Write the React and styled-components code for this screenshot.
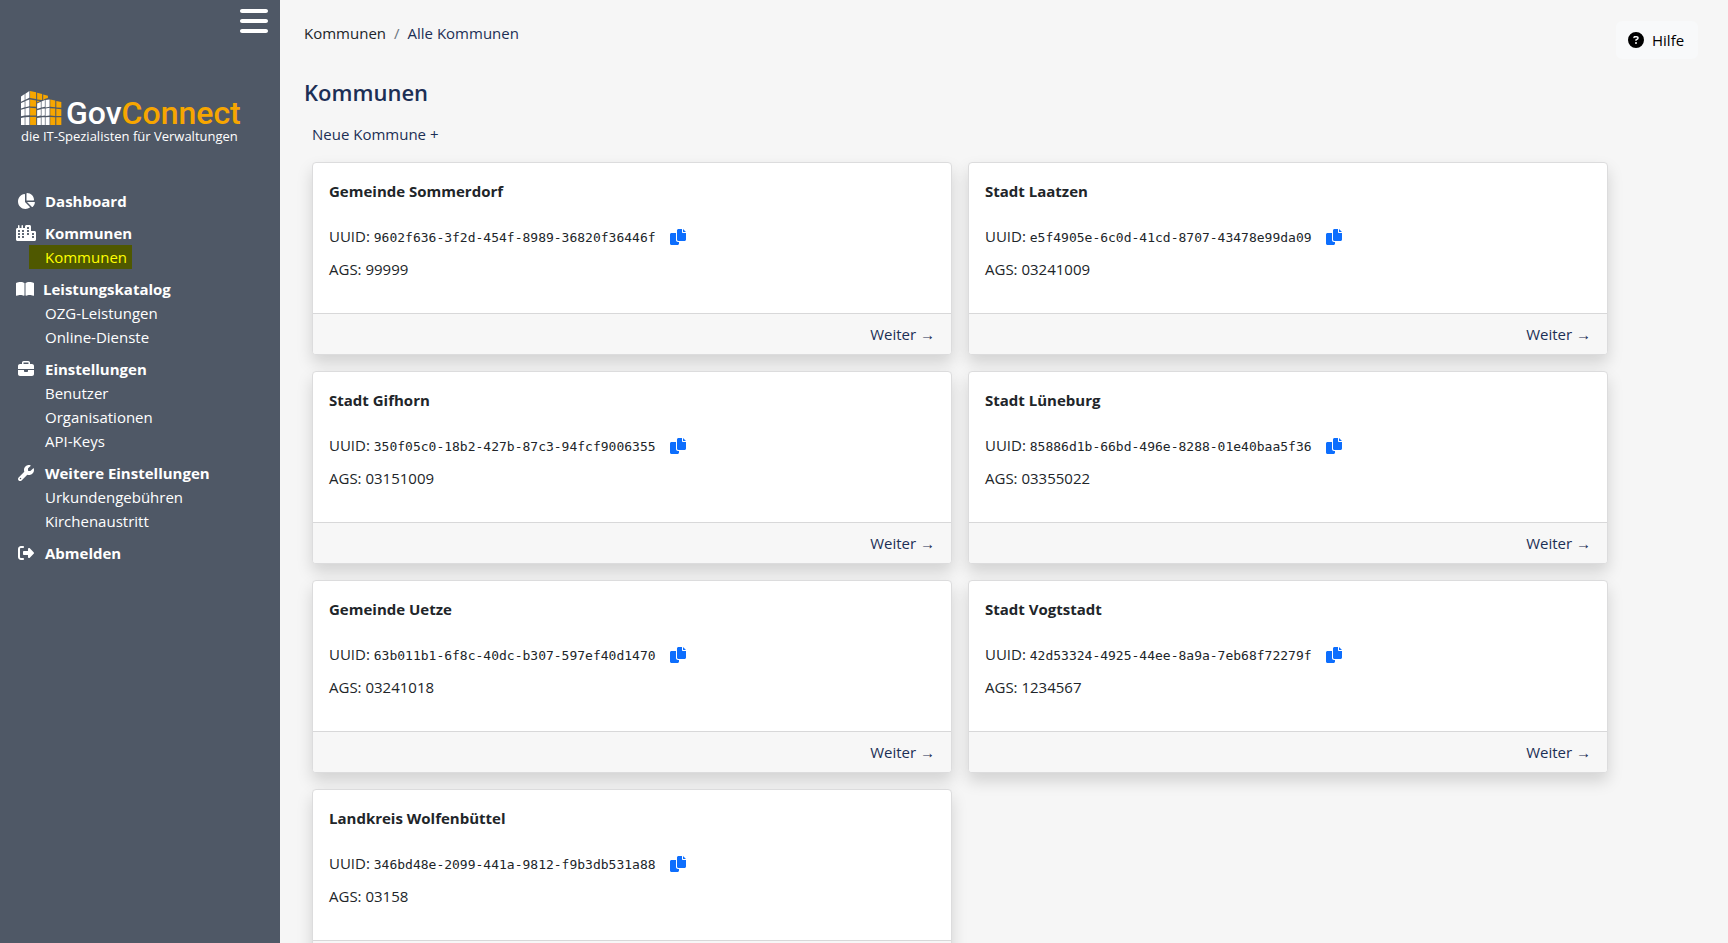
import React from "react";
import styled, { createGlobalStyle } from "styled-components";
import {
  FaBars,
  FaBookOpen,
  FaBriefcase,
  FaChartPie,
  FaCircleQuestion,
  FaCity,
  FaRightFromBracket,
  FaWrench,
} from "react-icons/fa6";

const GlobalStyle = createGlobalStyle`
  *, *::before, *::after { box-sizing: border-box; }
  html { scrollbar-width: none; }
  body {
    margin: 0;
    background: #f6f6f6;
    color: #212529;
    font-family: "Segoe UI", "Open Sans", "Noto Sans", sans-serif;
    font-size: 15px;
    line-height: 24px;
  }
  a { color: inherit; text-decoration: none; }
  button { font: inherit; border: 0; background: none; padding: 0; cursor: pointer; }
  ul, ol { list-style: none; margin: 0; padding: 0; }
  svg { display: block; }
`;

const Layout = styled.div`
  display: flex;
  min-height: 100vh;
`;

const Sidebar = styled.aside`
  flex: 0 0 280px;
  background: #4f5866;
  color: #fff;
`;

const MenuBar = styled.div`
  display: flex;
  justify-content: flex-end;
  padding: 5px 10px 0;
`;

const MenuButton = styled.button`
  color: #fff;
  font-size: 32px;
`;

const Logo = styled.a`
  display: block;
  margin: 53px 20px 0 21px;
`;

const LogoTop = styled.span`
  display: flex;
  align-items: flex-end;
  gap: 4px;
  height: 36px;
`;

const Wordmark = styled.span`
  font-family: Roboto, sans-serif;
  font-size: 32px;
  font-weight: 500;
  line-height: 26px;
`;

const Accent = styled.span`
  color: #f7a600;
`;

const Tagline = styled.span`
  display: block;
  font-size: 13px;
  line-height: 20px;
  white-space: nowrap;
`;

const Nav = styled.nav`
  margin-top: 43px;
  padding-left: 16px;
`;

const NavGroup = styled.div`
  margin-bottom: 8px;
`;

const NavHeading = styled.a`
  display: flex;
  align-items: center;
  font-weight: 700;
`;

const NavIcon = styled.span`
  flex: none;
  margin-right: 9px;
  svg { width: ${(p) => p.$width}px; height: 16px; }
`;

const NavLink = styled.a`
  display: block;
  width: fit-content;
  margin-left: 13px;
  padding: 0 5px 0 16px;
  color: ${(p) => (p.$active ? "#ffff00" : "#fff")};
  background: ${(p) => (p.$active ? "#4f5800" : "transparent")};
`;

const Main = styled.main`
  flex: 1;
  min-width: 0;
  display: flex;
  align-items: flex-start;
  gap: 8px;
  padding: 21px 30px 16px 24px;
`;

const Content = styled.div`
  flex: 1;
  min-width: 0;
`;

const Breadcrumb = styled.ol`
  display: flex;
  gap: 8px;
`;

const Crumb = styled.li`
  color: ${(p) => (p.$muted ? "#6c757d" : p.$current ? "#1c2f55" : "#212529")};
`;

const Title = styled.h1`
  margin: 31px 0 14px;
  color: #1c2f55;
  font-size: 22px;
  font-weight: 600;
  line-height: 32px;
`;

const Section = styled.section`
  padding-left: 8px;
`;

const TextLink = styled.a`
  color: #1c2f55;
`;

const CardGrid = styled.div`
  display: grid;
  grid-template-columns: repeat(2, minmax(0, 1fr));
  gap: 16px;
  margin-top: 16px;
`;

const Card = styled.article`
  background: #fff;
  border: 1px solid #dcdcdd;
  border-radius: 4px;
  box-shadow: 0 8px 16px rgba(0, 0, 0, 0.15);
`;

const CardBody = styled.div`
  padding: 16px 16px 32px;
`;

const CardTitle = styled.h2`
  margin: 0 0 22px;
  font-size: 15px;
  font-weight: 700;
  line-height: 24px;
`;

const Field = styled.div`
  display: flex;
  align-items: center;
  gap: 14px;
  height: 24px;
  & + & { margin-top: 8px; }
`;

const Uuid = styled.code`
  font-family: Consolas, "DejaVu Sans Mono", monospace;
  font-size: 13px;
`;

const CopyButton = styled.button`
  color: #0d6efd;
`;

const CardFooter = styled.footer`
  display: flex;
  justify-content: flex-end;
  padding: 8px 16px;
  background: #f7f7f7;
  border-top: 1px solid #d8d8d9;
  border-radius: 0 0 3px 3px;
`;

const HelpButton = styled.button`
  display: flex;
  align-items: center;
  gap: 8px;
  min-width: 82px;
  height: 38px;
  padding: 0 12px;
  border-radius: 6px;
  background: #f8f9fa;
  color: #000;
  svg { font-size: 16px; }
`;

const WHITE_PANES = [
  "0,16 11,9 11,27 0,32",
  "13,8 25,0 25,20 13,26",
  "0,36 11,31 11,48 0,52",
  "13,30 25,25 25,45 13,48",
  "0,56 11,53 11,73 0,75",
  "13,52 25,49 25,72 13,73",
  "0,80 11,78 11,101 0,101",
  "13,78 25,77 25,101 13,101",
  "48,37 59,32 59,50 48,53",
  "61,31 71,27 71,47 61,49",
  "73,27 85,25 85,47 73,49",
  "48,57 59,54 59,73 48,75",
  "61,53 71,52 71,73 61,74",
  "73,52 85,50 85,73 73,74",
  "48,80 59,79 59,101 48,101",
  "61,78 71,78 71,101 61,101",
  "73,78 85,77 85,101 73,101",
];

const ORANGE_PANES = [
  "27,0 45,4 45,24 27,21",
  "48,5 63,9 63,27 48,25",
  "66,10 80,14 80,21 72,23 66,27",
  "27,25 45,28 45,47 27,46",
  "48,29 57,30 48,34",
  "27,50 45,51 45,73 27,73",
  "27,77 45,77 45,101 27,101",
  "87,25 102,28 102,48 87,47",
  "105,30 120,33 120,50 105,49",
  "87,51 102,52 102,74 87,73",
  "105,53 120,54 120,74 105,74",
  "87,77 102,78 102,101 87,101",
  "105,78 120,78 120,101 105,101",
];

function Buildings() {
  return (
    <svg width="41" height="35" viewBox="0 0 122 104" aria-hidden="true">
      <g fill="#fff">
        {WHITE_PANES.map((p) => <polygon key={p} points={p} />)}
      </g>
      <g fill="#f7a600">
        {ORANGE_PANES.map((p) => <polygon key={p} points={p} />)}
      </g>
    </svg>
  );
}

function CopyIcon() {
  return (
    <svg width="16" height="16" viewBox="0 0 512 512" fill="currentColor" aria-hidden="true">
      <path d="M384 96V0H272c-26.500 0-48 21.500-48 48v288c0 26.500 21.500 48 48 48h192c26.500 0 48-21.500 48-48V128h-95.100C398.400 128 384 113.600 384 96zM416 0v96h96L416 0zM192 352V128H48c-26.500 0-48 21.500-48 48v288c0 26.500 21.500 48 48 48h192c26.500 0 48-21.500 48-48v-48h-32c-35.300 0-64-28.700-64-64z" />
    </svg>
  );
}

const NAV = [
  { label: "Dashboard", icon: FaChartPie, links: [] },
  { label: "Kommunen", icon: FaCity, links: ["Kommunen"] },
  { label: "Leistungskatalog", icon: FaBookOpen, iconWidth: 18, links: ["OZG-Leistungen", "Online-Dienste"] },
  { label: "Einstellungen", icon: FaBriefcase, links: ["Benutzer", "Organisationen", "API-Keys"] },
  { label: "Weitere Einstellungen", icon: FaWrench, links: ["Urkundengebühren", "Kirchenaustritt"] },
  { label: "Abmelden", icon: FaRightFromBracket, links: [] },
];

const KOMMUNEN = [
  { name: "Gemeinde Sommerdorf", uuid: "9602f636-3f2d-454f-8989-36820f36446f", ags: "99999" },
  { name: "Stadt Laatzen", uuid: "e5f4905e-6c0d-41cd-8707-43478e99da09", ags: "03241009" },
  { name: "Stadt Gifhorn", uuid: "350f05c0-18b2-427b-87c3-94fcf9006355", ags: "03151009" },
  { name: "Stadt Lüneburg", uuid: "85886d1b-66bd-496e-8288-01e40baa5f36", ags: "03355022" },
  { name: "Gemeinde Uetze", uuid: "63b011b1-6f8c-40dc-b307-597ef40d1470", ags: "03241018" },
  { name: "Stadt Vogtstadt", uuid: "42d53324-4925-44ee-8a9a-7eb68f72279f", ags: "1234567" },
  { name: "Landkreis Wolfenbüttel", uuid: "346bd48e-2099-441a-9812-f9b3db531a88", ags: "03158" },
];

function KommuneCard({ name, uuid, ags }) {
  return (
    <Card>
      <CardBody>
        <CardTitle>{name}</CardTitle>
        <Field>
          <span>UUID: <Uuid>{uuid}</Uuid></span>
          <CopyButton type="button" aria-label="UUID kopieren"><CopyIcon /></CopyButton>
        </Field>
        <Field>
          <span>AGS: {ags}</span>
        </Field>
      </CardBody>
      <CardFooter>
        <TextLink href="#">Weiter →</TextLink>
      </CardFooter>
    </Card>
  );
}

export default function App() {
  return (
    <>
      <GlobalStyle />
      <Layout>
        <Sidebar>
          <MenuBar>
            <MenuButton type="button" aria-label="Menü"><FaBars /></MenuButton>
          </MenuBar>
          <Logo href="#">
            <LogoTop>
              <Buildings />
              <Wordmark>Gov<Accent>Connect</Accent></Wordmark>
            </LogoTop>
            <Tagline>die IT-Spezialisten für Verwaltungen</Tagline>
          </Logo>
          <Nav>
            {NAV.map(({ label, icon: Icon, iconWidth = 20, links }) => (
              <NavGroup key={label}>
                <NavHeading href="#">
                  <NavIcon $width={iconWidth}><Icon /></NavIcon>
                  {label}
                </NavHeading>
                <ul>
                  {links.map((link) => (
                    <li key={link}>
                      <NavLink href="#" $active={link === "Kommunen"}>{link}</NavLink>
                    </li>
                  ))}
                </ul>
              </NavGroup>
            ))}
          </Nav>
        </Sidebar>
        <Main>
          <Content>
            <nav aria-label="Brotkrumen">
              <Breadcrumb>
                <Crumb><a href="#">Kommunen</a></Crumb>
                <Crumb $muted aria-hidden="true">/</Crumb>
                <Crumb $current>Alle Kommunen</Crumb>
              </Breadcrumb>
            </nav>
            <Title>Kommunen</Title>
            <Section>
              <TextLink href="#">Neue Kommune +</TextLink>
              <CardGrid>
                {KOMMUNEN.map((k) => <KommuneCard key={k.uuid} {...k} />)}
              </CardGrid>
            </Section>
          </Content>
          <HelpButton type="button"><FaCircleQuestion />Hilfe</HelpButton>
        </Main>
      </Layout>
    </>
  );
}
